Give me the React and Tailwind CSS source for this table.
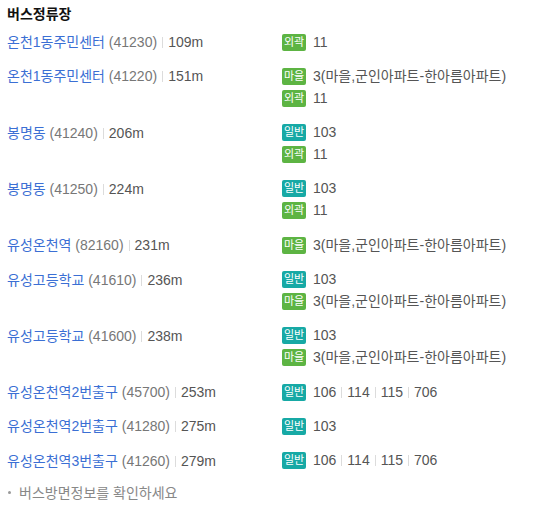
const VILLAGE = "3(마을,군인아파트-한아름아파트)";

const STOPS = [
  { name: "온천1동주민센터", id: "41230", dist: "109m", routes: [["외곽", ["11"]]] },
  { name: "온천1동주민센터", id: "41220", dist: "151m", routes: [["마을", [VILLAGE]], ["외곽", ["11"]]] },
  { name: "봉명동", id: "41240", dist: "206m", routes: [["일반", ["103"]], ["외곽", ["11"]]] },
  { name: "봉명동", id: "41250", dist: "224m", routes: [["일반", ["103"]], ["외곽", ["11"]]] },
  { name: "유성온천역", id: "82160", dist: "231m", routes: [["마을", [VILLAGE]]] },
  { name: "유성고등학교", id: "41610", dist: "236m", routes: [["일반", ["103"]], ["마을", [VILLAGE]]] },
  { name: "유성고등학교", id: "41600", dist: "238m", routes: [["일반", ["103"]], ["마을", [VILLAGE]]] },
  { name: "유성온천역2번출구", id: "45700", dist: "253m", routes: [["일반", ["106", "114", "115", "706"]]] },
  { name: "유성온천역2번출구", id: "41280", dist: "275m", routes: [["일반", ["103"]]] },
  { name: "유성온천역3번출구", id: "41260", dist: "279m", routes: [["일반", ["106", "114", "115", "706"]]] },
];

function Sep() {
  return <span className="inline-block w-px h-[11px] bg-[#dcdcdc] mx-[5px] align-[-1px]" />;
}

function Badge({ type }) {
  const bg = type === "일반" ? "bg-[#17a9a5]" : "bg-[#5db443]";
  return (
    <span className={`${bg} inline-flex items-center justify-center w-[24px] h-[17px] rounded-[2px] text-white text-[11px] leading-none mr-[7px]`}>
      {type}
    </span>
  );
}

export default function App() {
  return (
    <div
      className="w-[534px] h-[508px] bg-white pt-[4px] px-[7px] text-[14px] text-[#555]"
      style={{ fontFamily: '"Liberation Sans", "Noto Sans CJK KR", sans-serif' }}
    >
      <h3 className="font-bold text-[#111] h-[21px] leading-[21px]">버스정류장</h3>

      <ul>
        {STOPS.map((s) => (
          <li key={s.id} className="flex py-[6.15px]">
            <div className="w-[275px] shrink-0 h-[22px] leading-[22px] whitespace-nowrap">
              <span className="text-[#3b6fd4]">{s.name}</span>{" "}
              <span className="text-[#777]">({s.id})</span>
              <Sep />
              <span>{s.dist}</span>
            </div>
            <div className="flex flex-col">
              {s.routes.map(([type, nums]) => (
                <div key={type} className="flex items-center h-[22px] whitespace-nowrap">
                  <Badge type={type} />
                  {nums.map((n, i) => (
                    <span key={n}>
                      {i > 0 && <Sep />}
                      {n}
                    </span>
                  ))}
                </div>
              ))}
            </div>
          </li>
        ))}
      </ul>

      <p className="mt-[4px] h-[22px] leading-[22px] text-[#888] flex items-center">
        <span className="w-[3px] h-[3px] rounded-full bg-[#999] mr-[8px] ml-[1px]" />
        <span>버스방면정보를 확인하세요</span>
      </p>
    </div>
  );
}
